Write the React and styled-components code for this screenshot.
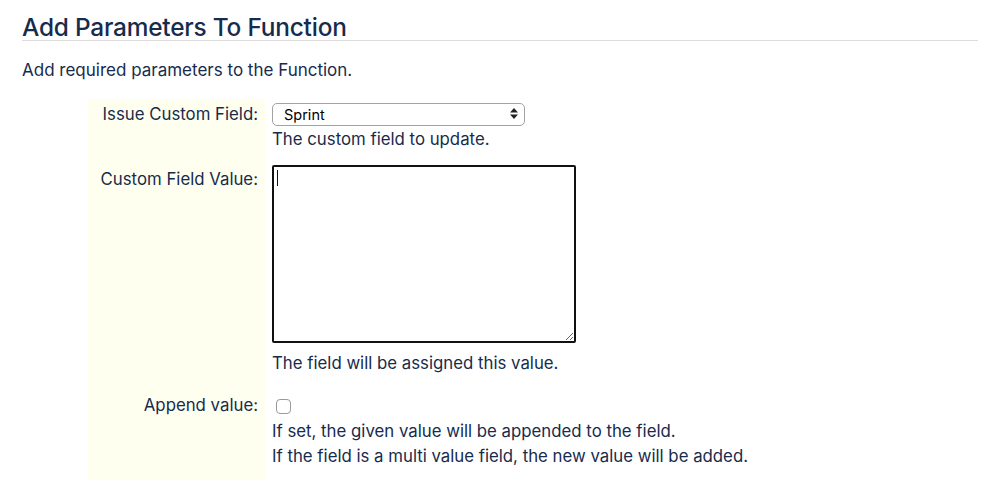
import React from "react";
import styled, { createGlobalStyle } from "styled-components";

const GlobalStyle = createGlobalStyle`
  body {
    margin: 0;
    background: #fff;
    font-family: Inter, "Noto Sans", "Liberation Sans", sans-serif;
    color: #172b4d;
  }
`;

const Page = styled.div`
  padding: 14px 20px 0 22px;
`;

const Title = styled.h2`
  margin: 0;
  font-size: 24.4px;
  font-weight: 500;
  line-height: 26px;
  letter-spacing: -0.2px;
  border-bottom: 1px solid #dcdcdc;
`;

const Intro = styled.p`
  margin: 17px 0 16px;
  font-size: 17px;
  line-height: 25px;
`;

const Form = styled.div`
  display: grid;
  grid-template-columns: 177px 1fr;
  margin-left: 66px;
`;

const Label = styled.div`
  background: #fffff0;
  text-align: right;
  font-size: 16.8px;
  line-height: 25px;
  padding: ${(p) => p.$pt || 3}px 7px ${(p) => p.$pb}px 0;
`;

const Field = styled.div`
  padding: 3px 0 ${(p) => p.$pb}px 7px;
  font-size: 16.8px;
  line-height: 25px;
`;

const SelectWrap = styled.div`
  position: relative;
  width: 253px;
  height: 23px;
  margin-bottom: 2px;
`;

const Select = styled.select`
  appearance: none;
  width: 100%;
  height: 100%;
  box-sizing: border-box;
  border: 1px solid #a3a3a3;
  border-radius: 5px;
  background: #fff;
  padding: 0 0 0 11px;
  font-family: Inter, "Noto Sans", sans-serif;
  font-size: 14.5px;
  color: #000;
  outline: none;
`;

const Arrows = styled.svg`
  position: absolute;
  right: 7px;
  top: 6px;
  pointer-events: none;
`;

const Help = styled.div`
  font-size: 16.8px;
  line-height: 25px;
  color: #172b4d;
`;

const Area = styled.textarea`
  display: block;
  width: 304px;
  height: 178px;
  box-sizing: border-box;
  border: 2px solid #111;
  border-radius: 2px;
  margin: 0 0 8px;
  font-family: Inter, sans-serif;
  font-size: 14px;
  padding: 2px 3px;
  outline: none;
`;

const Caret = styled.span`
  position: absolute;
  left: 5px;
  top: 5px;
  width: 1px;
  height: 16px;
  background: #111;
`;

const AreaWrap = styled.div`
  position: relative;
  width: 304px;
`;

const CheckRow = styled.div`
  height: 26px;
  display: flex;
  align-items: center;
`;

const Check = styled.input`
  appearance: none;
  width: 15px;
  height: 15px;
  margin: 0 0 0 4px;
  border: 1px solid #9a9a9a;
  border-radius: 4px;
  background: #fff;
`;

export default function App() {
  return (
    <Page>
      <GlobalStyle />
      <Title>Add Parameters To Function</Title>
      <Intro>Add required parameters to the Function.</Intro>
      <Form>
        <Label $pb={10}>Issue Custom Field:</Label>
        <Field $pb={10}>
          <SelectWrap>
            <Select defaultValue="sprint">
              <option value="sprint">Sprint</option>
            </Select>
            <Arrows width="8" height="11" viewBox="0 0 8 11">
              <path d="M4 0 L8 4.5 H0 Z M4 11 L8 6.5 H0 Z" fill="#222" />
            </Arrows>
          </SelectWrap>
          <Help>The custom field to update.</Help>
        </Field>

        <Label $pt={5} $pb={12}>Custom Field Value:</Label>
        <Field $pb={14}>
          <AreaWrap>
            <Area />
            <Caret />
          </AreaWrap>
          <Help>The field will be assigned this value.</Help>
        </Field>

        <Label $pb={14}>Append value:</Label>
        <Field $pb={14}>
          <CheckRow>
            <Check type="checkbox" />
          </CheckRow>
          <Help>If set, the given value will be appended to the field.</Help>
          <Help>If the field is a multi value field, the new value will be added.</Help>
        </Field>
      </Form>
    </Page>
  );
}
